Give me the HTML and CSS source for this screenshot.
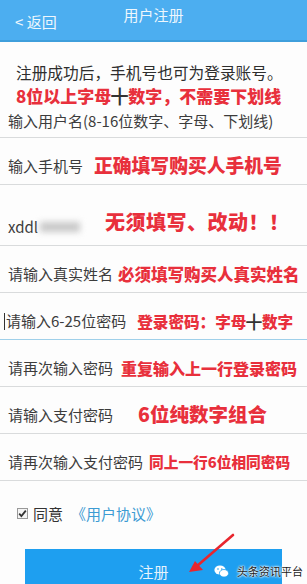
FILE: index.html
```html
<!DOCTYPE html>
<html lang="zh">
<head>
<meta charset="utf-8">
<link rel="stylesheet" href="styles.css">
</head>
<body>
<div class="page">
  <header class="bar">
    <div class="title">用户注册</div>
    <div class="back">&lt; 返回</div>
  </header>
  <section class="intro">
    <p class="tip">注册成功后，手机号也可为登录账号。</p>
    <p class="note big">8位以上字母<span class="plus">╋</span>数字，不需要下划线</p>
  </section>
  <div class="rows">
    <div class="row r1"><span class="ph">输入用户名(8-16位数字、字母、下划线)</span></div>
    <div class="row"><span class="ph">输入手机号</span><span class="note n2">正确填写购买人手机号</span></div>
    <div class="row tall"><span class="ph">xddl<span class="blur"></span></span><span class="note n3">无须填写、改动！！</span></div>
    <div class="row"><span class="ph">请输入真实姓名</span><span class="note n4">必须填写购买人真实姓名</span></div>
    <div class="row focus"><span class="ph"><span class="caret"></span>请输入6-25位密码</span><span class="note n5">登录密码：字母<span class="plus">╋</span>数字</span></div>
    <div class="row"><span class="ph">请再次输入密码</span><span class="note n6">重复输入上一行登录密码</span></div>
    <div class="row"><span class="ph">请输入支付密码</span><span class="note n7">6位纯数字组合</span></div>
    <div class="row"><span class="ph">请再次输入支付密码</span><span class="note n8">同上一行6位相同密码</span></div>
  </div>
  <div class="agree">
    <svg class="cb" width="11" height="11" viewBox="0 0 11 11"><rect x="0.5" y="0.5" width="10" height="10" fill="#f4f4f4" stroke="#999"/><path d="M2.2 5.6 L4.4 8 L8.8 2.6" fill="none" stroke="#333" stroke-width="1.8"/></svg>
    <span class="ok">同意</span>
    <span class="link">《用户协议》</span>
  </div>
  <div class="btn">注册</div>
  <svg class="arrow" width="60" height="50" viewBox="0 0 60 50"><path d="M52 3 L16 34" stroke="#e8262e" stroke-width="2.6" fill="none" stroke-linecap="round"/><path d="M8 40 L22 38 L14 29 Z" fill="#e8262e"/></svg>
  <div class="mark">
    <svg width="15" height="13" viewBox="0 0 15 13"><ellipse cx="6" cy="5" rx="5.6" ry="4.6" fill="#fff"/><ellipse cx="10" cy="8.3" rx="4.6" ry="3.8" fill="#fff" stroke="#1e9ff0" stroke-width="0.8"/><circle cx="4" cy="4" r="0.8" fill="#1e9ff0"/><circle cx="7.8" cy="4" r="0.8" fill="#1e9ff0"/></svg>
    <span>头条资讯平台</span>
  </div>
</div>
</body>
</html>
```
FILE: styles.css
```css
html, body { margin: 0; padding: 0; }
body {
  width: 307px;
  height: 584px;
  overflow: hidden;
  background: #fdfdfd;
  font-family: "Noto Sans CJK SC", "Noto Sans", sans-serif;
  color: #3a3a3a;
}
.page { position: relative; height: 584px; }
.bar {
  height: 40px;
  background: #4caef0;
  border-bottom: 2px solid #3f9fdc;
  display: grid;
}
.title, .back { grid-area: 1 / 1; line-height: 18px; color: #eef7fd; font-size: 15px; }
.title { justify-self: center; align-self: start; margin-top: 6px; }
.back { justify-self: start; align-self: start; margin-top: 13px; margin-left: 15px; }
.intro { padding: 20px 0 0 16px; }
.intro p { margin: 0; }
.tip { font-size: 15.7px; line-height: 22px; color: #2e2e2e; }
.note {
  color: #e8303c;
  font-weight: 900;
  text-shadow: 0 0 2px #fff, 0 0 3px #fff;
  white-space: nowrap;
}
.big { font-size: 17px; line-height: 24px; }
.plus { color: #333; font-weight: 900; }
.rows { display: flex; flex-direction: column; }
.row {
  border-bottom: 1px solid #d9dbdc;
  display: flex;
  align-items: flex-end;
  padding: 0 0 8px 8px;
  box-sizing: border-box;
  height: 47px;
  white-space: nowrap;
}
.row.r1 { height: 30px; padding-bottom: 6px; }
.row.tall { height: 61px; padding-bottom: 8px; }
.row.focus { border-bottom: 1px solid #9fd0ea; }
.ph { font-size: 15px; line-height: 20px; color: #3c3c3c; display: flex; align-items: center; }
.blur {
  display: inline-block;
  width: 40px; height: 10px;
  background: #c8c8c8;
  filter: blur(3px);
  margin-left: 2px;
}
.caret { display: inline-block; width: 1px; height: 17px; background: #333; margin: 0 1px 0 -4px; }
.n2 { font-size: 18.8px; line-height: 22px; margin-left: 11px; }
.n3 { font-size: 20px; line-height: 22px; margin-left: 25px; margin-bottom: 4px; letter-spacing: 0.5px; }
.n4 { font-size: 16.5px; line-height: 20px; margin-left: 5px; }
.n5 { font-size: 15.6px; line-height: 20px; margin-left: 11px; }
.n6 { font-size: 16px; line-height: 20px; margin-left: 8px; }
.n7 { font-size: 19.5px; line-height: 22px; margin-left: 25px; }
.n8 { font-size: 14.7px; line-height: 20px; margin-left: 6px; }
.agree {
  display: flex;
  align-items: center;
  padding: 22px 0 0 17px;
  height: 20px;
  font-size: 15px;
}
.cb { margin-right: 5px; }
.ok { color: #333; margin-right: 8px; }
.link { color: #3d9bd3; }
.btn {
  margin: 26px 25px 0 25px;
  height: 44px;
  background: #1e9ff0;
  color: #e6f3fc;
  font-size: 15px;
  display: flex;
  align-items: center;
  justify-content: center;
}
.arrow { position: absolute; left: 181px; top: 532px; }
.mark {
  position: absolute;
  left: 214px;
  top: 563px;
  display: flex;
  align-items: center;
  gap: 8px;
  font-size: 11px;
  color: #222;
}
.mark span { text-shadow: 0 0 2px #fff, 0 0 2px #fff, 0 0 3px #fff; }
```
